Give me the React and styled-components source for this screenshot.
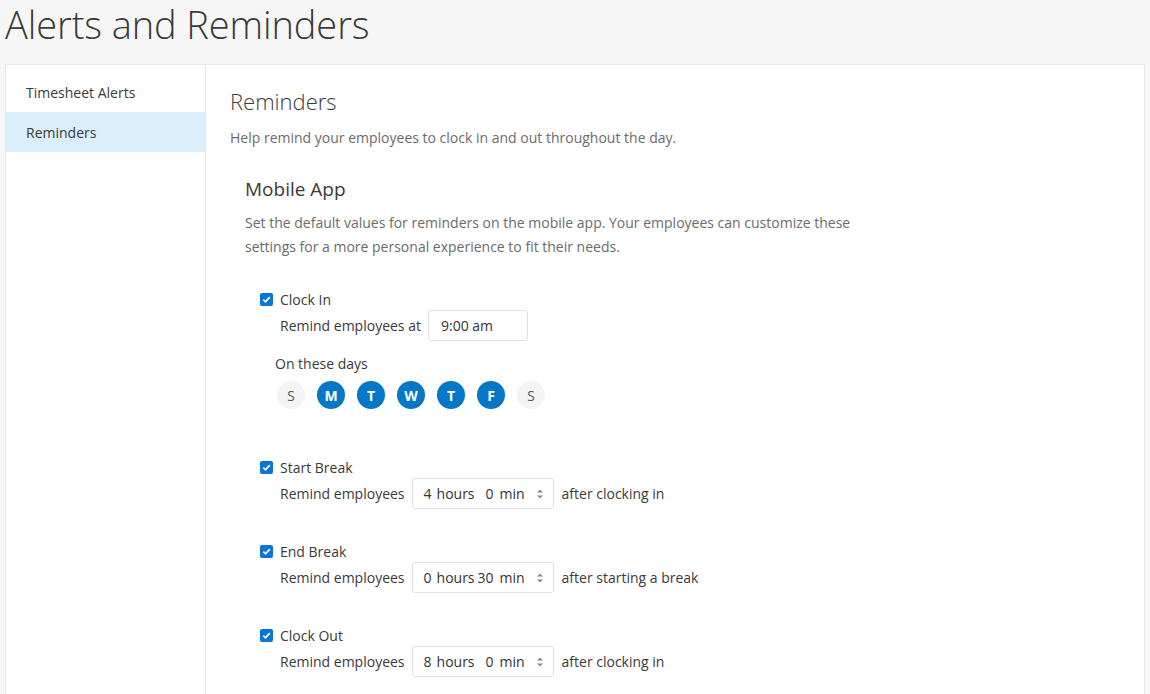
import styled, { createGlobalStyle } from "styled-components";

const GlobalStyle = createGlobalStyle`
  html, body {
    margin: 0;
    background: #f6f6f6;
    font-family: "Open Sans", "Noto Sans", sans-serif;
    color: #333333;
  }
  * { box-sizing: border-box; }
`;

const days = [
  { label: "S", on: false },
  { label: "M", on: true },
  { label: "T", on: true },
  { label: "W", on: true },
  { label: "T", on: true },
  { label: "F", on: true },
  { label: "S", on: false },
];

const breakRows = [
  { title: "Start Break", hours: 4, min: 0, after: "after clocking in" },
  { title: "End Break", hours: 0, min: 30, after: "after starting a break" },
  { title: "Clock Out", hours: 8, min: 0, after: "after clocking in" },
];

const Check = () => (
  <CheckBox>
    <svg width="9" height="9" viewBox="0 0 10 10">
      <path d="M1.5 5.2 L4 7.6 L8.6 2.4" fill="none" stroke="#fff" strokeWidth="1.9" />
    </svg>
  </CheckBox>
);

const Arrows = () => (
  <svg width="8" height="12" viewBox="0 0 8 12">
    <path d="M1 4.5 L4 1.5 L7 4.5 Z" fill="#8a8a8a" />
    <path d="M1 7.5 L4 10.5 L7 7.5 Z" fill="#8a8a8a" />
  </svg>
);

const App = () => {
  return (
    <>
      <GlobalStyle />
      <Page>
        <Header>
          <Title>Alerts and Reminders</Title>
        </Header>
        <Card>
          <Sidebar>
            <NavItem>Timesheet Alerts</NavItem>
            <NavItem active>Reminders</NavItem>
          </Sidebar>
          <Main>
            <Heading>Reminders</Heading>
            <Lead>Help remind your employees to clock in and out throughout the day.</Lead>
            <Section>
              <SubHeading>Mobile App</SubHeading>
              <Description>
                Set the default values for reminders on the mobile app. Your employees can customize these
                settings for a more personal experience to fit their needs.
              </Description>
              <Options>
                <Option>
                  <CheckRow>
                    <Check />
                    Clock In
                  </CheckRow>
                  <Field>
                    Remind employees at
                    <TimeInput>9:00 am</TimeInput>
                  </Field>
                  <DaysLabel>On these days</DaysLabel>
                  <Days>
                    {days.map((d, i) => (
                      <Day key={i} on={d.on ? 1 : 0}>
                        {d.label}
                      </Day>
                    ))}
                  </Days>
                </Option>
                {breakRows.map((r) => (
                  <Option key={r.title}>
                    <CheckRow>
                      <Check />
                      {r.title}
                    </CheckRow>
                    <Field>
                      Remind employees
                      <Duration>
                        <HoursNum>{r.hours}</HoursNum>
                        <HoursUnit>hours</HoursUnit>
                        <MinNum>{r.min}</MinNum>
                        <span>min</span>
                        <Spin>
                          <Arrows />
                        </Spin>
                      </Duration>
                      {r.after}
                    </Field>
                  </Option>
                ))}
              </Options>
            </Section>
          </Main>
        </Card>
      </Page>
    </>
  );
};

const Page = styled.div`
  padding: 0 5px;
  height: 694px;
  overflow: hidden;
`;

const Header = styled.header`
  height: 64px;
  padding-top: 1px;
`;

const Title = styled.h1`
  margin: 0;
  font-size: 38px;
  font-weight: 300;
  line-height: 46px;
  letter-spacing: -0.1px;
  color: #3a3a3a;
`;

const Card = styled.div`
  display: flex;
  background: #ffffff;
  border: 1px solid #e6e6e6;
  min-height: 700px;
`;

const Sidebar = styled.nav`
  width: 200px;
  flex-shrink: 0;
  border-right: 1px solid #e6e6e6;
  padding-top: 7px;
`;

const NavItem = styled.div`
  height: 40px;
  display: flex;
  align-items: center;
  padding-left: 20px;
  font-size: 14px;
  color: #3a3a3a;
  background: ${(p) => (p.active ? "#dbeefc" : "transparent")};
`;

const Main = styled.main`
  flex: 1;
  padding: 21px 24px 0;
`;

const Heading = styled.h2`
  margin: 0;
  font-size: 22px;
  font-weight: 300;
  line-height: 30px;
  color: #3a3a3a;
`;

const Lead = styled.p`
  margin: 12px 0 0;
  font-size: 14px;
  line-height: 20px;
  color: #6b6b6b;
`;

const Section = styled.section`
  padding-left: 15px;
  margin-top: 28px;
`;

const SubHeading = styled.h3`
  margin: 0;
  font-size: 19px;
  font-weight: 400;
  line-height: 26px;
  color: #3a3a3a;
`;

const Description = styled.p`
  margin: 9px 0 0;
  max-width: 620px;
  font-size: 14px;
  line-height: 24px;
  color: #6b6b6b;
`;

const Options = styled.div`
  display: flex;
  flex-direction: column;
  gap: 32px;
  margin-top: 30px;
  padding-left: 15px;
`;

const Option = styled.div`
  display: flex;
  flex-direction: column;
`;

const CheckRow = styled.label`
  display: flex;
  align-items: center;
  gap: 7px;
  height: 20px;
  font-size: 14px;
  color: #3a3a3a;
`;

const CheckBox = styled.span`
  width: 13px;
  height: 13px;
  border-radius: 2px;
  background: #0a75d8;
  display: flex;
  align-items: center;
  justify-content: center;
`;

const Field = styled.div`
  display: flex;
  align-items: center;
  gap: 7px;
  margin-top: 1px;
  padding-left: 20px;
  height: 31px;
  font-size: 14px;
  color: #3a3a3a;
`;

const TimeInput = styled.div`
  width: 100px;
  height: 31px;
  border: 1px solid #e0e0e0;
  border-radius: 3px;
  padding-left: 12px;
  display: flex;
  align-items: center;
  font-size: 14px;
  color: #333;
`;

const Duration = styled.div`
  width: 142px;
  height: 31px;
  border: 1px solid #e0e0e0;
  border-radius: 3px;
  display: flex;
  align-items: center;
  padding-left: 11px;
  margin-right: 1px;
  font-size: 14px;
  color: #333;
`;

const HoursNum = styled.span`
  width: 13px;
`;

const HoursUnit = styled.span`
  width: 39px;
`;

const MinNum = styled.span`
  width: 18px;
  text-align: right;
  margin-right: 6px;
`;

const Spin = styled.span`
  margin-left: auto;
  margin-right: 9px;
  display: flex;
`;

const DaysLabel = styled.div`
  margin-top: 11px;
  padding-left: 15px;
  font-size: 14px;
  line-height: 24px;
  color: #3a3a3a;
`;

const Days = styled.div`
  display: flex;
  gap: 12px;
  padding-left: 17px;
  margin-top: 5px;
  margin-bottom: 16px;
`;

const Day = styled.div`
  width: 28px;
  height: 28px;
  border-radius: 50%;
  display: flex;
  align-items: center;
  justify-content: center;
  font-size: 14px;
  font-weight: ${(p) => (p.on ? 700 : 400)};
  background: ${(p) => (p.on ? "#0577c7" : "#f4f4f4")};
  color: ${(p) => (p.on ? "#ffffff" : "#555555")};
`;

export default App;
